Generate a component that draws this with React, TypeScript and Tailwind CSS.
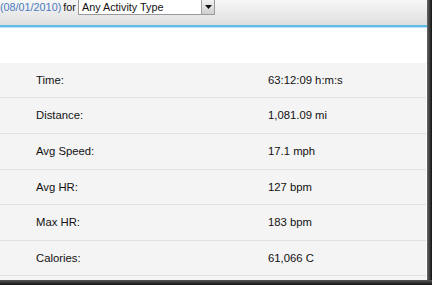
import React from "react";

const rows: { label: string; value: string; h: string }[] = [
  { label: "Time:", value: "63:12:09 h:m:s", h: "h-[35px]" },
  { label: "Distance:", value: "1,081.09 mi", h: "h-[36px]" },
  { label: "Avg Speed:", value: "17.1 mph", h: "h-[36px]" },
  { label: "Avg HR:", value: "127 bpm", h: "h-[35px]" },
  { label: "Max HR:", value: "183 bpm", h: "h-[36px]" },
  { label: "Calories:", value: "61,066 C", h: "h-[35px]" },
];

export default function App() {
  return (
    <div
      className="w-[432px] h-[285px] overflow-hidden flex flex-col bg-[#1e1e1e] text-[11.3px] text-[#111]"
      style={{ fontFamily: '"Liberation Sans", Arial, sans-serif' }}
    >
      <div className="flex h-[280px]">
        <div className="w-[427px] h-[280px] flex flex-col bg-white">
          {/* header bar */}
          <div className="h-[25px] flex items-start bg-gradient-to-b from-[#f7f7f7] to-[#dfdfdf]">
            <div className="w-[78px] h-[15px] flex items-center text-[10.8px]">
              <span className="text-[#4a7ac0]">(08/01/2010)</span>
              <span className="ml-[2px]">for</span>
            </div>
            <div className="w-[137px] h-[15px] bg-white border border-t-0 border-[#9a9a9a] flex items-center justify-between">
              <span className="pl-[3px] leading-none text-[10.8px]">Any Activity Type</span>
              <div className="w-[13px] h-[14px] border-l border-[#a0a0a0] bg-gradient-to-b from-[#f2f2f2] to-[#cfcfcf] flex items-center justify-center">
                <svg width="7" height="4" viewBox="0 0 7 4">
                  <path d="M0 0h7L3.5 4z" fill="#111" />
                </svg>
              </div>
            </div>
          </div>
          <div className="h-[2px] bg-[#62bde6]" />
          <div className="h-[1px] bg-[#b9e2f4]" />
          {/* white spacer */}
          <div className="h-[35px] bg-white" />
          {/* table */}
          <div className="flex-1 bg-[#f4f4f4] flex flex-col border-r border-[#fafafa]">
            {rows.map((r) => (
              <div
                key={r.label}
                className={`${r.h} flex items-center border-b border-[#e1e1e1]`}
              >
                <span className="w-[268px] pl-[36px]">{r.label}</span>
                <span>{r.value}</span>
              </div>
            ))}
          </div>
        </div>
        <div className="w-[5px] bg-gradient-to-r from-[#6a6a6a] to-[#151515]" />
      </div>
      <div className="h-[5px] bg-gradient-to-b from-[#5a5a5a] to-[#151515]" />
    </div>
  );
}
